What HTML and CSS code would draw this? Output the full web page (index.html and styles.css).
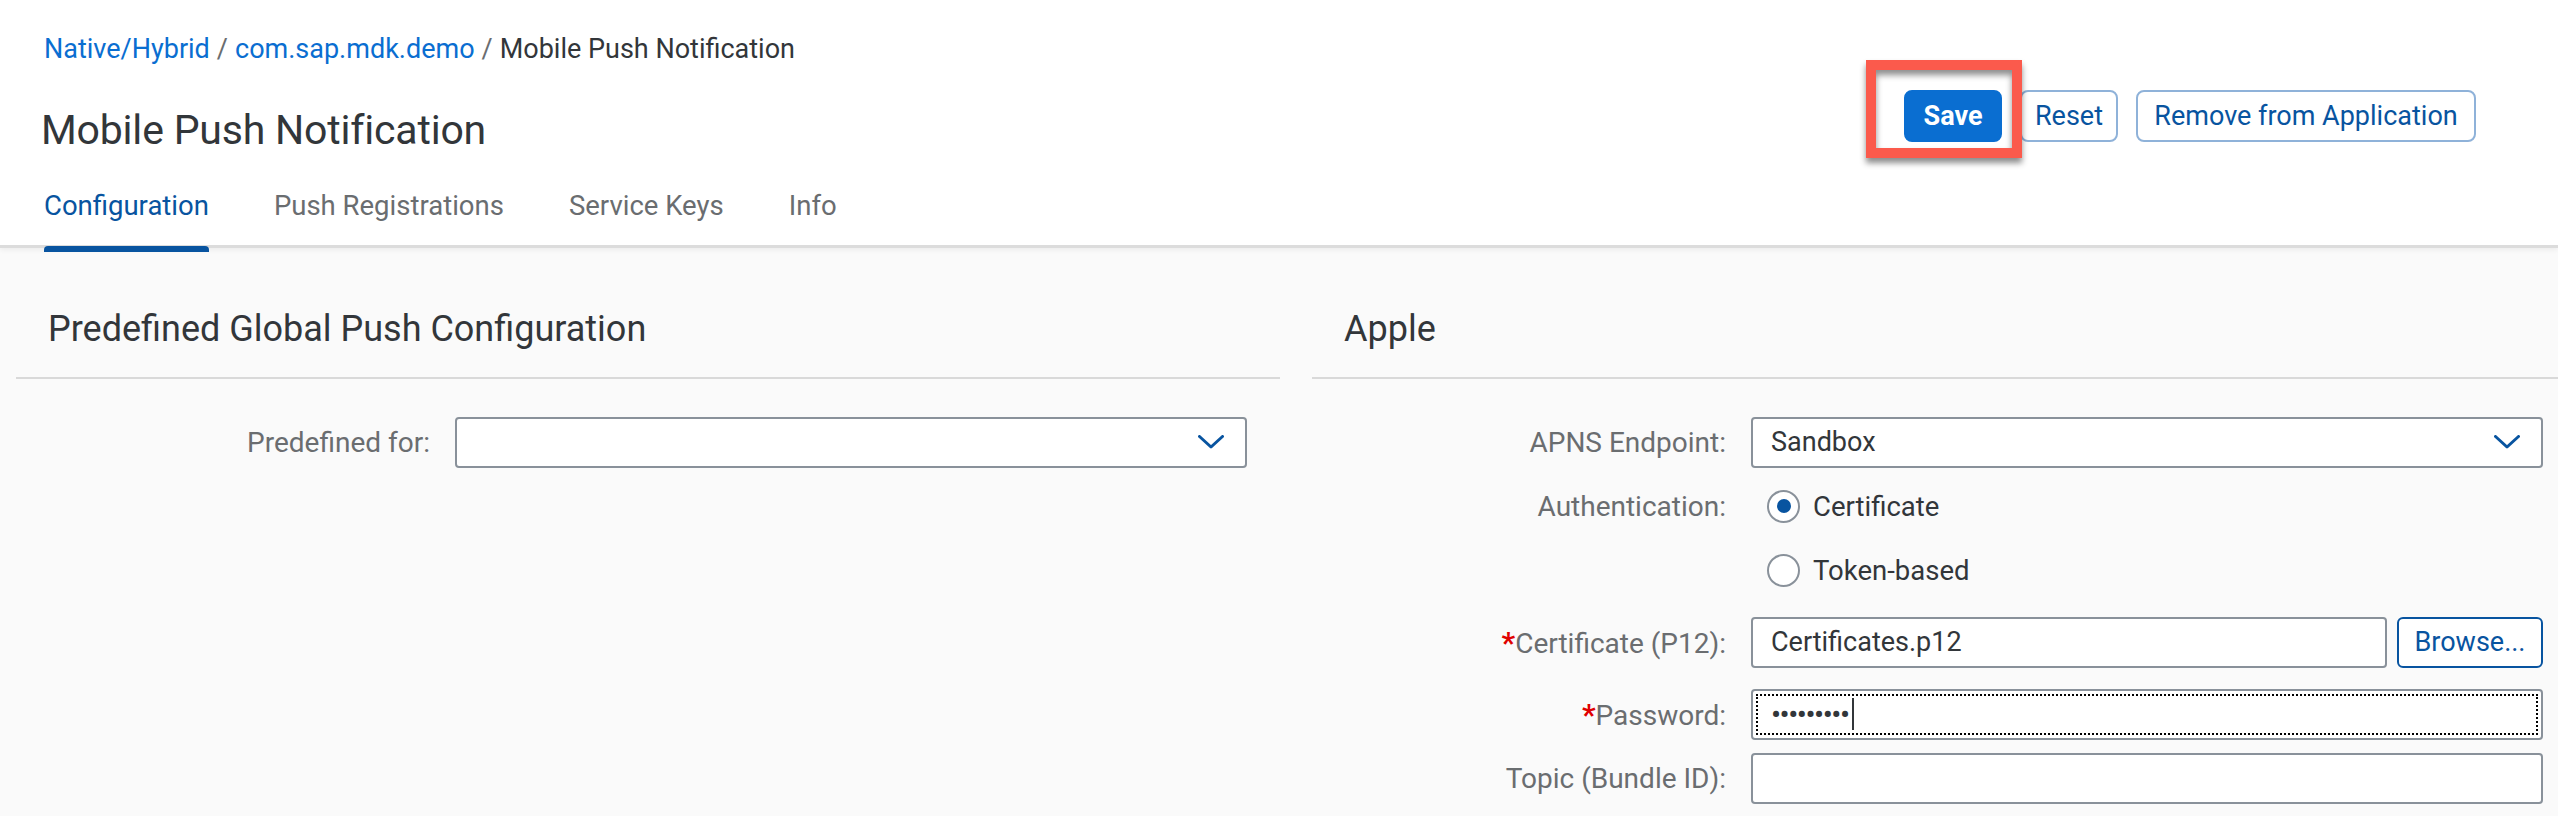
FILE: index.html
```html
<!DOCTYPE html>
<html>
<head>
<meta charset="utf-8">
<link rel="stylesheet" href="styles.css">
</head>
<body>
<header class="page-header">
  <div class="header-main">
    <nav class="breadcrumb">
      <a class="crumb-link">Native/Hybrid</a><span class="crumb-sep">/</span><a class="crumb-link">com.sap.mdk.demo</a><span class="crumb-sep">/</span><span class="crumb-current">Mobile Push Notification</span>
    </nav>
    <h1 class="page-title">Mobile Push Notification</h1>
    <div class="tabs">
      <div class="tab tab-active">Configuration</div>
      <div class="tab">Push Registrations</div>
      <div class="tab">Service Keys</div>
      <div class="tab">Info</div>
    </div>
  </div>
  <div class="actions">
    <div class="save-wrap">
      <button class="btn btn-primary">Save</button>
      <div class="annotation"></div>
    </div>
    <button class="btn btn-ghost">Reset</button>
    <button class="btn btn-ghost btn-wide">Remove from Application</button>
  </div>
</header>

<main class="content">
  <section class="panel">
    <div class="panel-header">Predefined Global Push Configuration</div>
    <div class="form">
      <div class="form-row">
        <label class="form-label">Predefined for:</label>
        <div class="select">
          <span class="select-value"></span>
          <svg class="chevron" width="26" height="14" viewBox="0 0 26 14"><path d="M1.5 1.5 L13 12 L24.5 1.5" fill="none" stroke="#0854a0" stroke-width="3" stroke-linecap="round" stroke-linejoin="round"/></svg>
        </div>
      </div>
    </div>
  </section>

  <section class="panel">
    <div class="panel-header">Apple</div>
    <div class="form">
      <div class="form-row">
        <label class="form-label">APNS Endpoint:</label>
        <div class="select">
          <span class="select-value">Sandbox</span>
          <svg class="chevron" width="26" height="14" viewBox="0 0 26 14"><path d="M1.5 1.5 L13 12 L24.5 1.5" fill="none" stroke="#0854a0" stroke-width="3" stroke-linecap="round" stroke-linejoin="round"/></svg>
        </div>
      </div>
      <div class="form-row">
        <label class="form-label">Authentication:</label>
        <div class="radio"><span class="radio-circle radio-checked"></span><span class="radio-text">Certificate</span></div>
      </div>
      <div class="form-row">
        <span></span>
        <div class="radio"><span class="radio-circle"></span><span class="radio-text">Token-based</span></div>
      </div>
      <div class="form-row row-spaced">
        <label class="form-label"><span class="req">*</span>Certificate (P12):</label>
        <div class="file-field">
          <div class="input">Certificates.p12</div>
          <button class="btn-browse">Browse...</button>
        </div>
      </div>
      <div class="form-row row-spaced">
        <label class="form-label"><span class="req">*</span>Password:</label>
        <div class="input input-focus"><span class="dots">•••••••••</span><span class="caret"></span></div>
      </div>
      <div class="form-row">
        <label class="form-label">Topic (Bundle ID):</label>
        <div class="input"></div>
      </div>
    </div>
  </section>
</main>
</body>
</html>
```
FILE: styles.css
```css
html, body {
  margin: 0;
  padding: 0;
}
body {
  width: 2558px;
  height: 816px;
  overflow: hidden;
  background: #fafafa;
  font-family: Roboto, "Noto Sans", Arial, sans-serif;
  color: #32363a;
}

.page-header {
  position: relative;
  height: 245px;
  background: #ffffff;
  border-bottom: 3px solid #dcdcdc;
  box-shadow: 0 2px 5px rgba(0, 0, 0, 0.06);
  display: flex;
  justify-content: space-between;
  padding: 0 82px 0 44px;
  z-index: 1;
}

.header-main {
  display: flex;
  flex-direction: column;
}

.breadcrumb {
  margin-top: 33px;
  font-size: 27px;
  line-height: 32px;
  white-space: nowrap;
}
.crumb-link {
  color: #0a6ed1;
  text-decoration: none;
}
.crumb-sep {
  color: #6a6d70;
  margin: 0 7px;
}
.crumb-current {
  color: #32363a;
}

.page-title {
  margin: 39px 0 0 -3px;
  font-size: 41px;
  line-height: 52px;
  font-weight: 400;
  letter-spacing: -0.2px;
  color: #32363a;
  white-space: nowrap;
}

.tabs {
  display: flex;
  gap: 65px;
  margin-top: 15px;
}
.tab {
  position: relative;
  height: 78px;
  line-height: 70px;
  font-size: 27.5px;
  color: #6a6d70;
  white-space: nowrap;
}
.tab-active {
  color: #0854a0;
}
.tab-active::after {
  content: "";
  position: absolute;
  left: 0;
  right: 0;
  bottom: -3px;
  height: 6px;
  background: #0854a0;
  border-radius: 4px 4px 0 0;
}

.actions {
  display: flex;
  align-items: flex-start;
  gap: 18px;
  padding-top: 90px;
}
.save-wrap {
  position: relative;
}
.btn {
  height: 52px;
  border-radius: 8px;
  font-family: inherit;
  font-size: 27px;
  padding: 0 22px;
  cursor: pointer;
  white-space: nowrap;
}
.btn-primary {
  width: 98px;
  background: #0a6ed1;
  color: #ffffff;
  border: 2px solid #0a6ed1;
  font-weight: 700;
  padding: 0;
}
.btn-ghost {
  width: 98px;
  background: #ffffff;
  color: #0854a0;
  border: 2px solid #8fb2d9;
  padding: 0;
}
.btn-wide {
  width: 340px;
}
.annotation {
  position: absolute;
  left: -38px;
  top: -30px;
  width: 136px;
  height: 78px;
  border: 10px solid #fb5a4c;
  box-shadow: 0 5px 6px rgba(0, 0, 0, 0.45), inset 0 5px 6px rgba(0, 0, 0, 0.45);
  pointer-events: none;
}

.content {
  display: flex;
  gap: 32px;
  padding: 33px 0 0 16px;
}
.panel {
  flex: 0 0 1264px;
}
.panel-header {
  height: 96px;
  display: flex;
  align-items: center;
  padding-left: 32px;
  font-size: 36px;
  color: #32363a;
  border-bottom: 2px solid #d9d9d9;
}

.form {
  padding: 31px 33px 0 0;
}
.form-row {
  display: grid;
  grid-template-columns: 414px 1fr;
  column-gap: 25px;
  align-items: center;
  height: 64px;
}
.row-spaced {
  margin-top: 8px;
}
.form-label {
  text-align: right;
  font-size: 28px;
  color: #6a6d70;
  white-space: nowrap;
}
.req {
  color: #e00000;
  font-weight: 700;
  font-size: 30px;
}

.select, .input {
  box-sizing: border-box;
  height: 51px;
  background: #ffffff;
  border: 2px solid #89919a;
  border-radius: 4px;
  display: flex;
  align-items: center;
  padding: 0 18px;
  font-size: 27px;
  color: #32363a;
}
.select {
  justify-content: space-between;
  padding-right: 21px;
}
.chevron {
  flex: 0 0 auto;
}

.radio {
  display: flex;
  align-items: center;
  padding-left: 16px;
  gap: 13px;
}
.radio-circle {
  box-sizing: border-box;
  width: 33px;
  height: 33px;
  border-radius: 50%;
  border: 2px solid #89919a;
  background: #ffffff;
  display: flex;
  align-items: center;
  justify-content: center;
}
.radio-checked::after {
  content: "";
  width: 14px;
  height: 14px;
  border-radius: 50%;
  background: #0854a0;
}
.radio-text {
  font-size: 27.5px;
  color: #32363a;
}

.file-field {
  display: flex;
  gap: 10px;
}
.file-field .input {
  flex: 1;
}
.btn-browse {
  box-sizing: border-box;
  width: 146px;
  height: 51px;
  background: #ffffff;
  border: 2px solid #0854a0;
  border-radius: 6px;
  color: #0854a0;
  font-family: inherit;
  font-size: 27px;
  padding: 0;
}

.input-focus {
  outline: 2px dotted #000000;
  outline-offset: -7px;
}
.dots {
  font-size: 30px;
  letter-spacing: -1.5px;
  color: #32363a;
}
.caret {
  display: inline-block;
  width: 2px;
  height: 32px;
  background: #32363a;
  margin-left: 3px;
}
```
